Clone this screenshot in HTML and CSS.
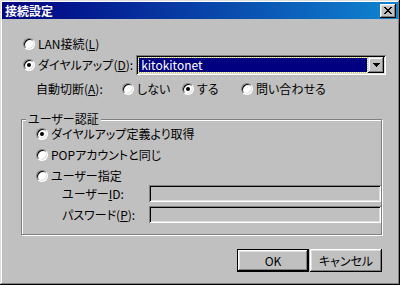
FILE: index.html
```html
<!DOCTYPE html>
<html lang="ja">
<head>
  <meta charset="UTF-8">
  <title>接続設定</title>
  <link rel="stylesheet" href="styles.css">
</head>
<body>

  <div class="window">
    <div class="titlebar">
      <span class="title">接続設定</span>
      <span class="close-btn">
        <svg width="8" height="7" viewBox="0 0 8 7" shape-rendering="crispEdges"><path d="M0 0h2v1H0zM6 0h2v1H6zM1 1h2v1H1zM5 1h2v1H5zM2 2h4v1H2zM3 3h2v1H3zM2 4h4v1H2zM1 5h2v1H1zM5 5h2v1H5zM0 6h2v1H0zM6 6h2v1H6z" fill="#000"/></svg>
      </span>
    </div>

    <div class="content">
      <div class="row row-lan">
        <span class="radio"></span>
        <span>LAN接続(<u>L</u>)</span>
      </div>

      <div class="row row-dial">
        <span class="radio checked"></span>
        <span>ダイヤルアップ(<u>D</u>):</span>
        <div class="combo">
          <span class="combo-value">kitokitonet</span>
          <span class="combo-btn">
            <svg width="7" height="4" viewBox="0 0 7 4" shape-rendering="crispEdges"><path d="M0 0h7v1H0zM1 1h5v1H1zM2 2h3v1H2zM3 3h1v1H3z" fill="#000"/></svg>
          </span>
        </div>
      </div>

      <div class="row row-auto">
        <span class="auto-label">自動切断(<u>A</u>):</span>
        <span class="option opt-no"><span class="radio"></span><span>しない</span></span>
        <span class="option opt-yes"><span class="radio checked"></span><span>する</span></span>
        <span class="option"><span class="radio"></span><span>問い合わせる</span></span>
      </div>

      <fieldset class="group">
        <legend>ユーザー認証</legend>
        <div class="row group-row">
          <span class="radio checked"></span>
          <span>ダイヤルアップ定義より取得</span>
        </div>
        <div class="row group-row">
          <span class="radio"></span>
          <span>POPアカウントと同じ</span>
        </div>
        <div class="row group-row">
          <span class="radio"></span>
          <span>ユーザー指定</span>
        </div>
        <div class="row field-row field-id">
          <span class="field-label">ユーザー<u>I</u>D:</span>
          <span class="textbox"></span>
        </div>
        <div class="row field-row field-pw">
          <span class="field-label">パスワード(<u>P</u>):</span>
          <span class="textbox"></span>
        </div>
      </fieldset>

      <div class="buttons">
        <span class="btn default">OK</span>
        <span class="btn">キャンセル</span>
      </div>
    </div>
  </div>

</body>
</html>
```

FILE: styles.css
```css
:root {
  --face: #c0c0c0;
  --shadow: #808080;
  --light: #dfdfdf;
  --hilite: #ffffff;
  --dark: #000000;
  --navy: #000080;
}

body {
  margin: 0;
  font-family: "Noto Sans CJK JP", "Liberation Sans", sans-serif;
  font-size: 12px;
  font-feature-settings: "palt";
  color: #000;
  background: var(--face);
}

u {
  text-decoration: underline;
  text-underline-offset: 1px;
}

.window {
  width: 400px;
  height: 285px;
  box-sizing: border-box;
  padding: 2px;
  background: var(--face);
  box-shadow: inset -1px -1px var(--dark), inset 1px 1px var(--light),
              inset -2px -2px var(--shadow), inset 2px 2px var(--hilite);
}

.titlebar {
  height: 17px;
  display: flex;
  align-items: center;
  background: linear-gradient(to right, var(--navy), #1084d0);
}

.title {
  padding-left: 3px;
  color: #fff;
  font-weight: bold;
  line-height: 14px;
}

.close-btn {
  margin-left: auto;
  margin-right: 2px;
  width: 16px;
  height: 14px;
  display: flex;
  align-items: center;
  justify-content: center;
  background: var(--face);
  box-shadow: inset -1px -1px var(--dark), inset 1px 1px var(--hilite),
              inset -2px -2px var(--shadow), inset 2px 2px var(--light);
}

.content {
  padding: 0 16px 0 19px;
}

.row {
  display: flex;
  align-items: center;
  gap: 3px;
  line-height: 14px;
  white-space: nowrap;
}

.radio {
  position: relative;
  flex: none;
  width: 12px;
  height: 12px;
  box-sizing: border-box;
  border-radius: 50%;
  background: #fff;
  border: 1px solid;
  border-color: var(--shadow) var(--hilite) var(--hilite) var(--shadow);
  box-shadow: inset 1px 1px var(--dark), inset -1px -1px var(--light);
}

.radio.checked::after {
  content: "";
  position: absolute;
  left: 3px;
  top: 3px;
  width: 4px;
  height: 4px;
  border-radius: 50%;
  background: #000;
}

.row-lan {
  height: 16px;
  margin-top: 17px;
  padding-left: 2px;
}

.row-dial {
  height: 20px;
  margin-top: 3px;
  padding-left: 2px;
}

.combo {
  margin-left: auto;
  margin-right: -4px;
  width: 251px;
  height: 20px;
  box-sizing: border-box;
  padding: 2px;
  display: flex;
  background: #fff;
  box-shadow: inset 1px 1px var(--shadow), inset -1px -1px var(--hilite),
              inset 2px 2px var(--dark), inset -2px -2px var(--light);
}

.combo-value {
  flex: 1;
  margin: 1px;
  padding-left: 2px;
  background: var(--navy);
  color: #fff;
  line-height: 14px;
  outline: 1px dotted #c8c860;
}

.combo-btn {
  width: 16px;
  display: flex;
  align-items: center;
  justify-content: center;
  background: var(--face);
  box-shadow: inset -1px -1px var(--dark), inset 1px 1px var(--light),
              inset -2px -2px var(--shadow), inset 2px 2px var(--hilite);
}

.row-auto {
  height: 16px;
  margin-top: 6px;
  padding-left: 15px;
  gap: 0;
}

.auto-label {
  width: 86px;
}

.option {
  display: flex;
  align-items: center;
  gap: 3px;
}

.opt-no {
  width: 60px;
}

.opt-yes {
  width: 59px;
}

.group {
  margin: 16px 0 0 0;
  padding: 2px 0 11px 14px;
  width: 361px;
  box-sizing: border-box;
  min-width: 0;
  border: 1px solid var(--shadow);
  box-shadow: inset 1px 1px var(--hilite), 1px 1px var(--hilite);
}

.group legend {
  margin-left: -10px;
  padding: 0 2px;
  line-height: 12px;
  background: var(--face);
}

.group-row {
  height: 14px;
  margin-bottom: 7px;
}

.group-row:nth-of-type(3) {
  margin-bottom: 0;
}

.field-row {
  height: 17px;
  gap: 0;
}

.field-id {
  margin-top: 2px;
}

.field-pw {
  margin-top: 4px;
}

.field-label {
  width: 113px;
  box-sizing: border-box;
  padding-left: 26px;
}

.textbox {
  width: 232px;
  height: 17px;
  box-sizing: border-box;
  background: var(--face);
  box-shadow: inset 1px 1px var(--shadow), inset -1px -1px var(--hilite),
              inset 2px 2px var(--dark), inset -2px -2px var(--light);
}

.buttons {
  display: flex;
  justify-content: flex-end;
  gap: 1px;
  margin-top: 14px;
}

.btn {
  width: 72px;
  height: 23px;
  box-sizing: border-box;
  display: flex;
  align-items: center;
  justify-content: center;
  line-height: 14px;
  background: var(--face);
  box-shadow: inset -1px -1px var(--dark), inset 1px 1px var(--hilite),
              inset -2px -2px var(--shadow), inset 2px 2px var(--light);
}

.btn.default {
  border: 1px solid var(--dark);
  box-shadow: inset -1px -1px var(--dark), inset 1px 1px var(--hilite),
              inset -2px -2px var(--shadow), inset 2px 2px var(--light);
}
```
